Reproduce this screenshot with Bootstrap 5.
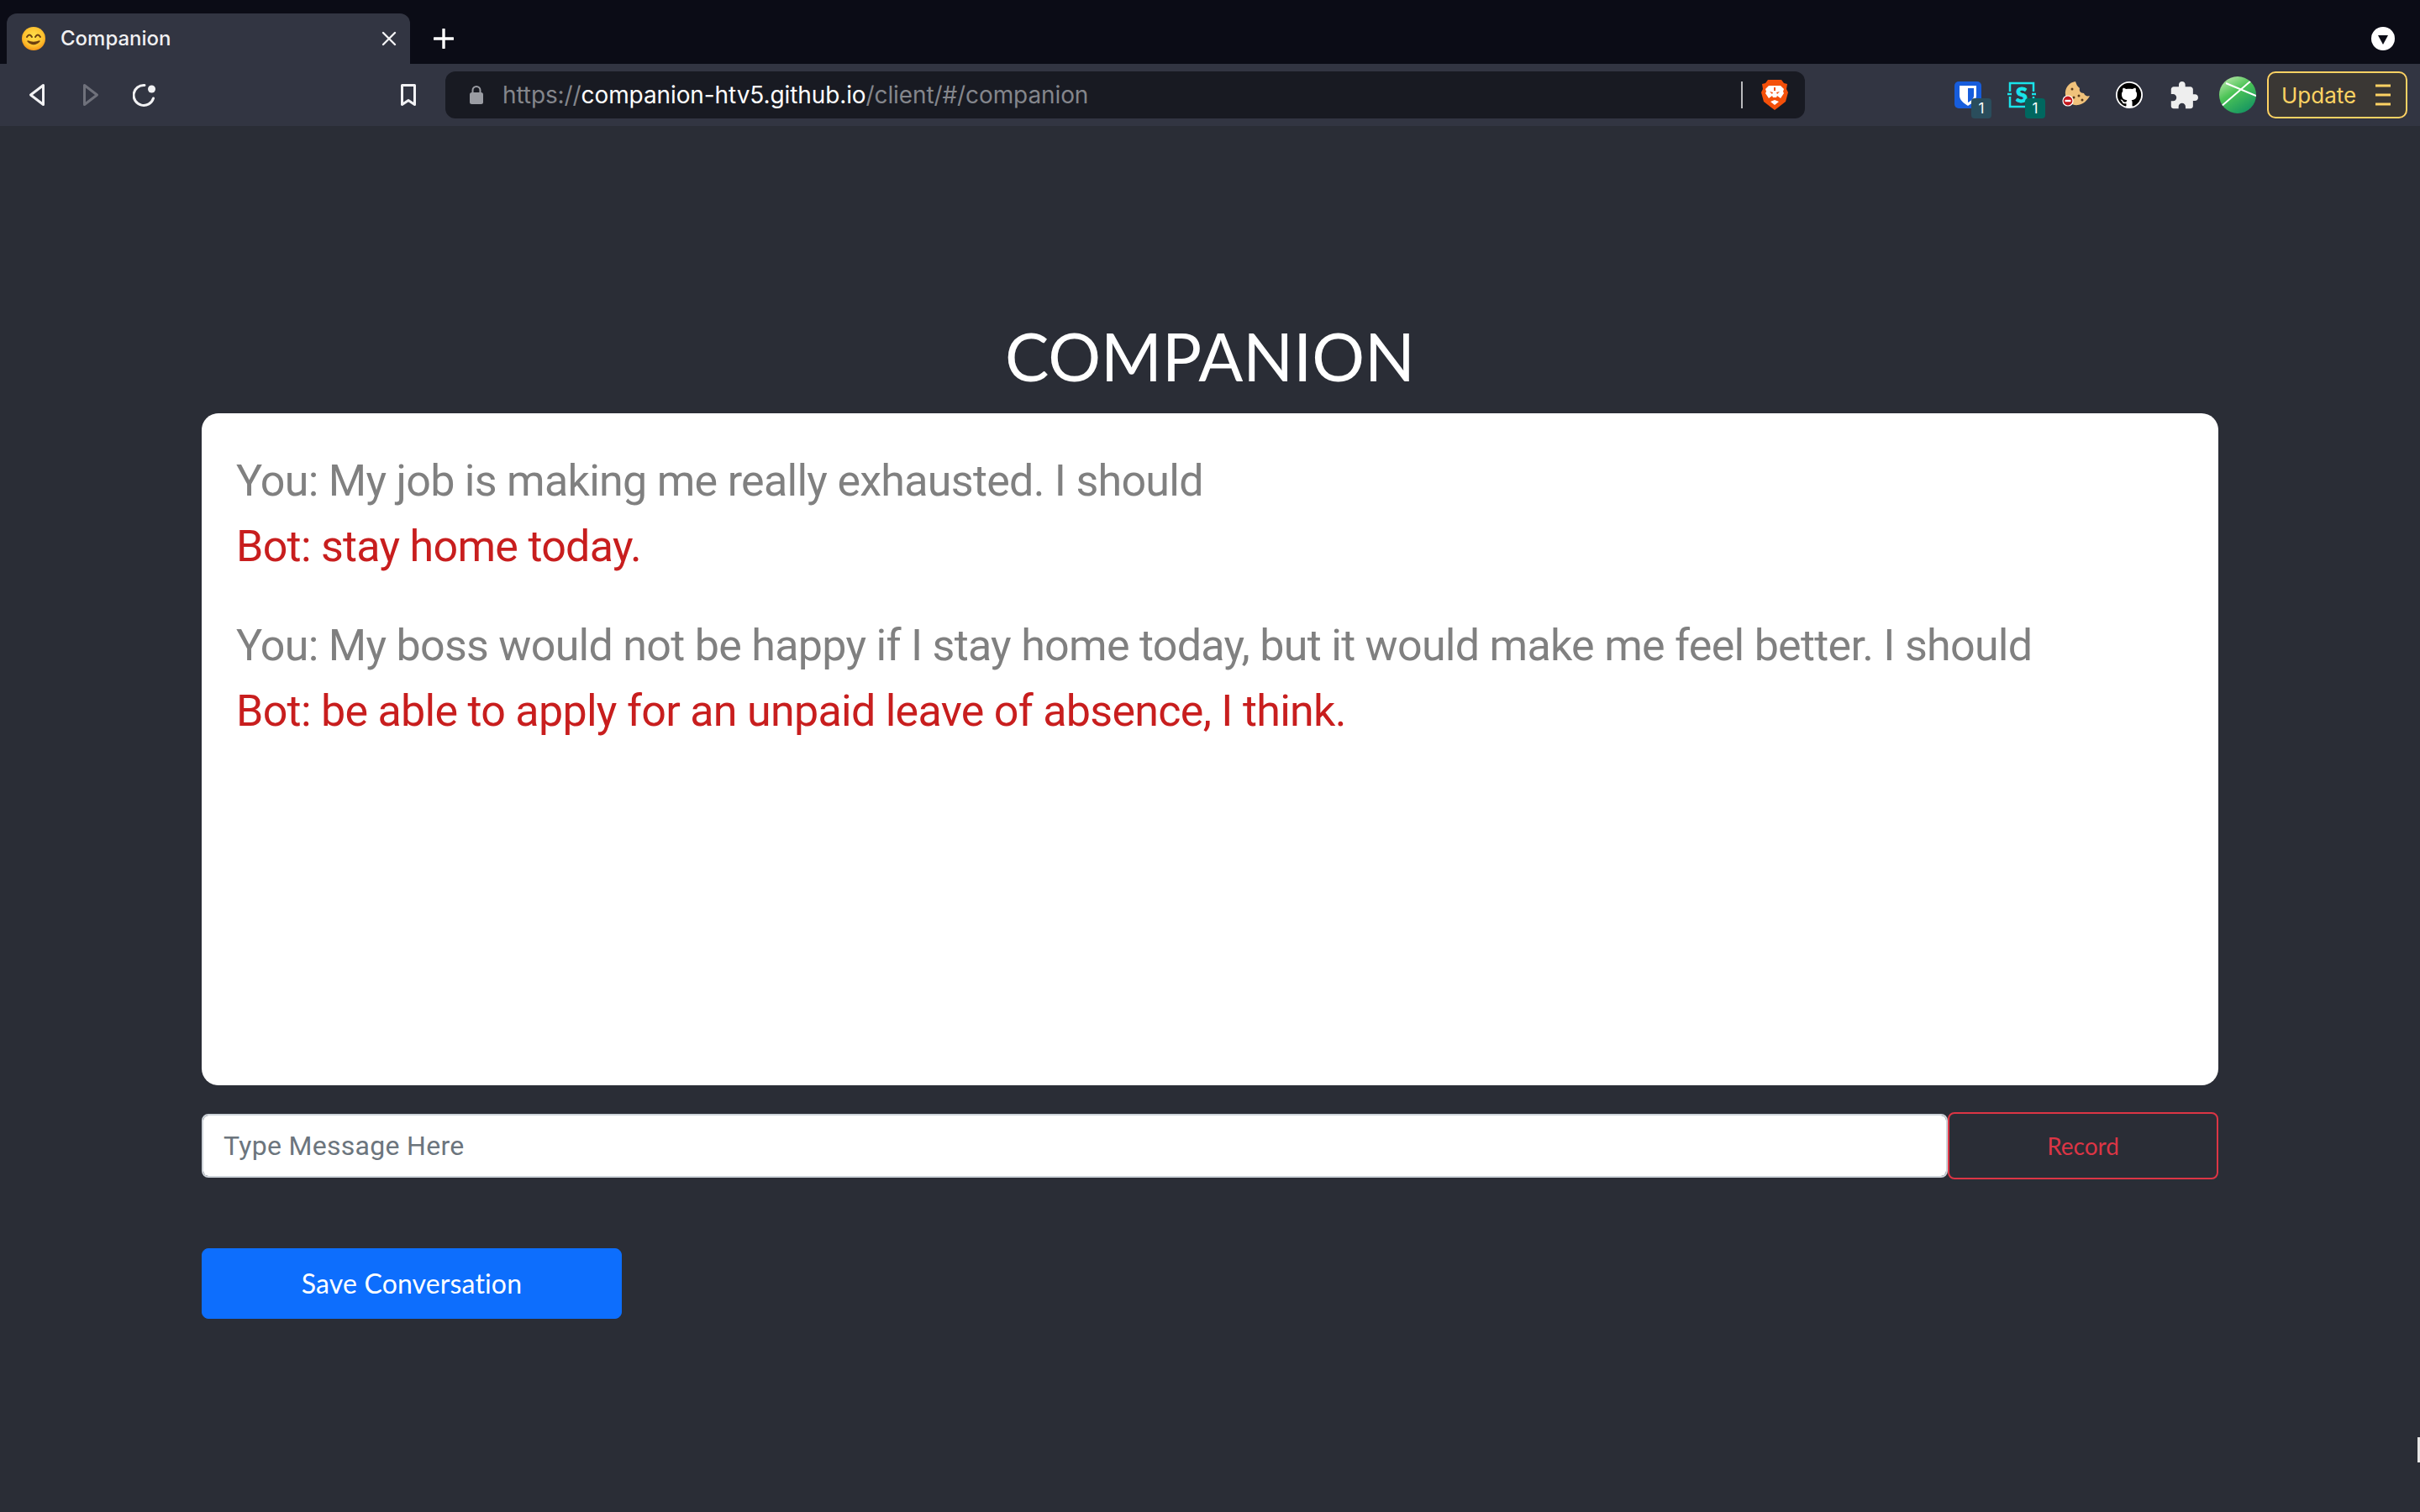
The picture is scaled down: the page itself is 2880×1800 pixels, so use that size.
<!DOCTYPE html>
<html lang="en">
<head>
<meta charset="utf-8">
<title>Companion</title>
<link href="https://cdn.jsdelivr.net/npm/bootstrap@5.3.0/dist/css/bootstrap.min.css" rel="stylesheet">
<style>
html,body{height:100%}
body{background:#2a2d36;font-family:Inter,"Liberation Sans",sans-serif;overflow:hidden;position:relative}
svg{display:block;flex:none}
.tabstrip{height:76px;background:#0b0c16;padding-left:8px;padding-right:30px}
.tabitem{width:480px;height:60px;background:#323542;border-radius:12px 12px 0 0;padding:0 16px 0 18px;color:#f0f0f2;font-size:24px;font-weight:500}
.tabname{margin-left:18px}
.toolbar{height:74px;background:#323542;padding-right:16px}
.slot{display:flex;align-items:center;justify-content:center;flex:none}
.urlbox{width:1618px;flex:none;height:56px;background:#181a22;border-radius:12px;padding:0 20px 0 28px;font-size:28px;letter-spacing:-.1px;color:#84868c}
.urlbox b{font-weight:400;color:#fff}
.urlsep{width:2px;height:32px;background:#b9babd;margin-left:auto;margin-right:22px}
.extwrap{position:relative}
.extcount{position:absolute;width:24px;height:24px;border-radius:4px;color:#fff;font-size:17px;line-height:24px;text-align:center;right:-12px;bottom:-12px}
.updatebtn{width:167px;flex:none;height:56px;border:2px solid #fdd263;border-radius:10px;background:#3a3734;color:#fdd263;font-size:26px;padding:0 18px 0 15px;margin-left:13px}
.pagewrap{padding:226px 240px 0}
.apptitle{font-family:Lato,"Noto Sans",sans-serif;font-size:78.5px;line-height:96px;font-weight:400;color:#fff;text-align:center;margin:0 0 20px}
.chatpanel{height:800px;background:#fff;border-radius:20px;padding:42px 41px 41px;font-family:Roboto,"Liberation Sans",sans-serif;font-size:52px;line-height:78px;letter-spacing:-.72px}
.chatpanel p{margin:0}
.chatblock{margin-bottom:40px}
.line-you{color:#808080}
.line-bot{color:#c81e1e}
.composer{margin-top:32px}
.msgfield.form-control{height:76px;font-family:Roboto,"Liberation Sans",sans-serif;font-size:32px;letter-spacing:.3px;border:2px solid #ced4da;border-radius:8px;padding:0 24px}
.msgfield::placeholder{color:#6c757d}
.recbtn.btn{width:322px;height:80px;flex:none;border:2px solid #dc3545;border-radius:8px;color:#dc3545;font-family:Lato,"Noto Sans",sans-serif;font-size:28px;background:transparent}
.savebtn.btn{display:block;width:500px;height:84px;margin-top:82px;border-radius:8px;font-family:Lato,"Noto Sans",sans-serif;font-size:32px;letter-spacing:.15px;background:#0d6efd;border-color:#0d6efd}
.cursorbit{position:absolute;right:0;top:1711px;width:3px;height:30px;background:#e6e6e6}
</style>
</head>
<body>
<div class="tabstrip d-flex align-items-end">
  <div class="tabitem d-flex align-items-center">
    <svg width="28" height="28" viewBox="0 0 28 28"><defs><radialGradient id="smile" cx=".5" cy=".4" r=".65"><stop offset="0" stop-color="#ffe14d"/><stop offset=".65" stop-color="#fdbf2d"/><stop offset="1" stop-color="#f28a12"/></radialGradient></defs><circle cx="14" cy="14" r="14" fill="url(#smile)"/><path d="M6 12q3-5 6 0M16 12q3-5 6 0" fill="none" stroke="#6b3f10" stroke-width="2" stroke-linecap="round"/><path d="M7 17q7 7 14 0q-7 3-14 0z" fill="#6b3f10" stroke="#6b3f10" stroke-width="1.5" stroke-linejoin="round"/></svg>
    <span class="tabname">Companion</span>
    <svg class="ms-auto" width="18" height="18" viewBox="0 0 18 18"><path d="M2 2l14 14M16 2L2 16" stroke="#f2f2f4" stroke-width="2.4" stroke-linecap="round"/></svg>
  </div>
  <div class="slot" style="height:60px;margin-left:28px">
    <svg width="24" height="24" viewBox="0 0 24 24"><path d="M12 1v22M1 12h22" stroke="#fff" stroke-width="3.4" stroke-linecap="round"/></svg>
  </div>
  <div class="slot ms-auto" style="height:60px">
    <svg width="28" height="28" viewBox="0 0 28 28"><circle cx="14" cy="14" r="14" fill="#fff"/><path d="M8 10h12l-6 11z" fill="#0b0c16"/></svg>
  </div>
</div>
<div class="toolbar d-flex align-items-center">
  <div class="slot" style="width:88px;margin-right:-12px"><svg width="20" height="28" viewBox="0 0 20 28"><path d="M17.5 2.5v23L2.5 14z" fill="none" stroke="#f2f2f4" stroke-width="3" stroke-linejoin="round"/></svg></div>
  <div class="slot" style="width:64px"><svg width="20" height="28" viewBox="0 0 20 28"><path d="M2.5 2.5v23L17.500 14z" fill="none" stroke="#6f717b" stroke-width="3" stroke-linejoin="round"/></svg></div>
  <div class="slot" style="width:64px"><svg width="28" height="28" viewBox="0 0 28 28"><path d="M24.500 18A12 12 0 1 1 14 2.500" fill="none" stroke="#f2f2f4" stroke-width="3" stroke-linecap="round"/><circle cx="22.500" cy="7" r="4.500" fill="#f2f2f4"/></svg></div>
  <div class="slot" style="width:300px;justify-content:flex-end;padding-right:8px"><svg width="20" height="28" viewBox="0 0 20 28"><path d="M2.500 2.500h15v23L10 20.500l-7.500 5z" fill="none" stroke="#f2f2f4" stroke-width="3" stroke-linejoin="round"/></svg></div>
  <div class="urlbox d-flex align-items-center" style="margin-left:26px">
    <svg width="18" height="22" viewBox="0 0 18 22" style="margin-right:22px"><rect x="1" y="8" width="16" height="14" rx="2.500" fill="#9a9ca3"/><path d="M4.500 9V5.500a4.500 4.500 0 0 1 9 0V9" fill="none" stroke="#9a9ca3" stroke-width="2"/></svg>
    <span>https://<b>companion-htv5.github.io</b>/client/#/companion</span>
    <span class="urlsep"></span>
    <svg width="32" height="36" viewBox="0 0 32 36"><path d="M8 0h16l3 4 4 1-1 6 2 4-3 11-9 7-4 3-4-3-9-7-3-11 2-4-1-6 4-1z" fill="#f4500a"/><path d="M9 7h14l4 4-1 3 1 2-4 6-4-3-1 2h-4l-1-2-4 3-4-6 1-2-1-3z" fill="#fff"/><path d="M10 14l4 1-1 2zM22 14l-4 1 1 2zM15 9h2v4h-2z" fill="#f4500a"/><path d="M11 26l5-2 5 2-5 4z" fill="#fff"/></svg>
  </div>
  <div class="slot extwrap" style="width:32px;margin-left:178px"><svg width="32" height="32" viewBox="0 0 32 32"><rect width="32" height="32" rx="5" fill="#175ddc"/><path d="M6 5h20v12c0 5-5 9-10 12-5-3-10-7-10-12z" fill="#fff"/><path d="M16 8h7v9c0 3-3 6-7 8z" fill="#175ddc"/></svg><span class="extcount" style="background:#2a4d5c">1</span></div>
  <div class="slot extwrap" style="width:32px;margin-left:32px"><svg width="36" height="32" viewBox="0 0 36 32"><path d="M4 12V2h28v10M4 18v12h28V18" fill="none" stroke="#19e3ea" stroke-width="2.500"/><path d="M1 15h5M30 15h5" stroke="#19e3ea" stroke-width="2.500"/><text x="18" y="25" text-anchor="middle" font-family="Lato,sans-serif" font-weight="900" font-size="25" fill="#19e3ea" stroke="#19e3ea" stroke-width="1">S</text></svg><span class="extcount" style="background:#00675f">1</span></div>
  <div class="slot" style="width:32px;margin-left:33px"><svg width="34" height="34" viewBox="0 0 34 34"><path d="M16 1C8 2 3 9 4 17c1 8 8 13 15 12 6-1 11-5 14-11-3 1-6 0-7-3-4 0-6-3-5-6-3-2-4-5-5-8z" fill="#f0c27b"/><circle cx="12" cy="10" r="1.500" fill="#5a3a1a"/><circle cx="20" cy="18" r="1.500" fill="#5a3a1a"/><circle cx="14" cy="20" r="1.500" fill="#5a3a1a"/><circle cx="24" cy="23" r="1.500" fill="#5a3a1a"/><circle cx="7" cy="24" r="6" fill="#c4161c" stroke="#fff" stroke-width="1.200"/><rect x="3.500" y="22.800" width="7" height="2.400" fill="#fff"/></svg></div>
  <div class="slot" style="width:32px;margin-left:31px"><svg width="32" height="32" viewBox="-1 -1 18 18"><circle cx="8" cy="8" r="9" fill="#fff"/><path fill="#000" d="M8 0C3.580 0 0 3.580 0 8c0 3.540 2.290 6.530 5.470 7.590.4.070.55-.17.55-.38 0-.19-.01-.82-.01-1.490-2.010.37-2.530-.49-2.690-.94-.09-.23-.48-.94-.82-1.130-.28-.15-.68-.52-.01-.53.63-.01 1.080.58 1.230.82.720 1.210 1.870.87 2.330.66.070-.52.28-.87.51-1.070-1.780-.2-3.640-.89-3.640-3.950 0-.87.31-1.590.82-2.150-.08-.2-.36-1.020.08-2.120 0 0 .67-.21 2.200.82.64-.18 1.320-.27 2-.27.68 0 1.360.09 2 .27 1.530-1.040 2.200-.82 2.200-.82.44 1.100.16 1.920.08 2.120.51.56.82 1.270.82 2.150 0 3.070-1.870 3.750-3.650 3.950.29.25.54.73.54 1.480 0 1.070-.01 1.930-.01 2.200 0 .21.15.46.55.38A8.013 8.013 0 0 0 16 8c0-4.420-3.580-8-8-8z"/></svg></div>
  <div class="slot" style="width:32px;margin-left:33px"><svg width="33" height="33" viewBox="1.500 1 21.500 21.500"><path fill="#eee" d="M20.500 11H19V7c0-1.100-.9-2-2-2h-4V3.500C13 2.120 11.880 1 10.500 1S8 2.120 8 3.500V5H4c-1.100 0-1.990.9-1.990 2v3.800H3.500c1.490 0 2.700 1.210 2.700 2.700s-1.210 2.700-2.700 2.700H2V20c0 1.100.9 2 2 2h3.800v-1.500c0-1.490 1.210-2.700 2.700-2.700 1.490 0 2.700 1.210 2.700 2.700V22H17c1.100 0 2-.9 2-2v-4h1.500c1.380 0 2.500-1.120 2.500-2.500S21.880 11 20.500 11z"/></svg></div>
  <div class="slot" style="width:44px;margin-left:26px"><svg width="44" height="44" viewBox="0 0 44 44"><defs><linearGradient id="orb" x1=".2" y1="0" x2=".8" y2="1"><stop offset="0" stop-color="#b7e6a8"/><stop offset=".4" stop-color="#4cc456"/><stop offset="1" stop-color="#119162"/></linearGradient><clipPath id="orbclip"><circle cx="22" cy="22" r="22"/></clipPath></defs><circle cx="22" cy="22" r="22" fill="url(#orb)"/><g clip-path="url(#orbclip)" stroke="#fff" stroke-width="2" fill="none"><path d="M2 36L38 5M8 8l38 16"/></g></svg></div>
  <div class="updatebtn d-flex align-items-center justify-content-between"><span>Update</span><svg width="18" height="26" viewBox="0 0 18 26"><path d="M0 2h18M0 13h18M0 24h18" stroke="#fdd263" stroke-width="3"/></svg></div>
</div>
<main class="pagewrap">
  <h1 class="apptitle">COMPANION</h1>
  <div class="chatpanel">
    <div class="chatblock">
      <p class="line-you">You: My job is making me really exhausted. I should</p>
      <p class="line-bot">Bot: stay home today.</p>
    </div>
    <div class="chatblock">
      <p class="line-you">You: My boss would not be happy if I stay home today, but it would make me feel better. I should</p>
      <p class="line-bot">Bot: be able to apply for an unpaid leave of absence, I think.</p>
    </div>
  </div>
  <div class="composer d-flex align-items-center">
    <input class="form-control msgfield" type="text" placeholder="Type Message Here">
    <button class="btn recbtn" type="button">Record</button>
  </div>
  <button class="btn btn-primary savebtn" type="button">Save Conversation</button>
</main>
<div class="cursorbit"></div>
<script src="https://cdn.jsdelivr.net/npm/bootstrap@5.3.0/dist/js/bootstrap.bundle.min.js"></script>
</body>
</html>
